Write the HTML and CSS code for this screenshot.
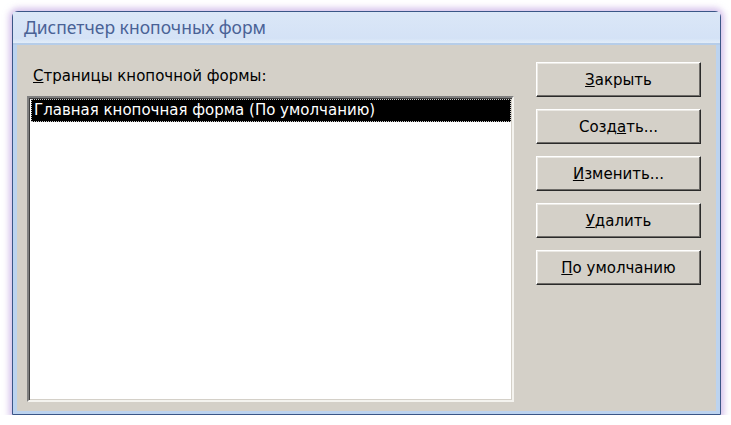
FILE: index.html
```html
<!DOCTYPE html>
<html lang="ru">
<head>
  <meta charset="UTF-8">
  <title>Диспетчер кнопочных форм</title>
  <link rel="stylesheet" href="styles.css">
</head>
<body>
  <div class="okno">
    <div class="zagolovok">Диспетчер кнопочных форм</div>
    <div class="ramka">
      <div class="soderzhimoe">
        <div class="levaya">
          <p class="metka"><u>С</u>траницы кнопочной формы:</p>
          <div class="spisok">
            <div class="stroka vybrana">Главная кнопочная форма (По умолчанию)</div>
          </div>
        </div>
        <div class="knopki">
          <button class="knopka"><u>З</u>акрыть</button>
          <button class="knopka">Созд<u>а</u>ть...</button>
          <button class="knopka"><u>И</u>зменить...</button>
          <button class="knopka"><u>У</u>далить</button>
          <button class="knopka"><u>П</u>о умолчанию</button>
        </div>
      </div>
    </div>
  </div>
</body>
</html>
```

FILE: styles.css
```css
body {
  margin: 0;
  background: #fff;
  font-family: "DejaVu Sans", sans-serif;
}
.okno {
  width: 707px;
  height: 402px;
  margin: 11px 0 0 12px;
  border: 1px solid #3b5687;
  border-radius: 6px 6px 0 0;
  box-shadow: 0 0 6px 3px rgba(190, 160, 225, 0.65);
  background: #d9e6f7;
  display: flex;
  flex-direction: column;
}
.zagolovok {
  height: 28px;
  padding: 3px 0 0 11px;
  font-family: "Noto Sans", "Open Sans", sans-serif;
  font-size: 17.5px;
  color: #4a6296;
  background: linear-gradient(#dbe7f7, #d4e2f6 85%, #e2edf9);
  border-bottom: 2px solid #b6cde9;
}
.ramka {
  flex: 1;
  padding: 0 4px 3px 4px;
  background: #bcd3ef;
  display: flex;
}
.soderzhimoe {
  flex: 1;
  background: #d4d0c8;
  display: flex;
  gap: 22px;
  padding: 17px 0 0 10px;
}
.levaya {
  width: 487px;
  display: flex;
  flex-direction: column;
}
.metka {
  margin: 5px 0 0 6px;
  height: 29px;
  font-size: 15px;
  color: #000;
}
.spisok {
  height: 300px;
  background: #fff;
  border: 2px solid;
  border-color: #808080 #f4f3ef #f4f3ef #808080;
  box-shadow: inset 1px 1px #404040, inset -1px -1px #d4d0c8;
  padding: 1px 1px 1px 2px;
}
.stroka {
  height: 23px;
  padding: 0 0 0 3px;
  font-size: 15px;
  line-height: 23px;
  white-space: nowrap;
}
.vybrana {
  background: #000;
  color: #fff;
  outline: 1px dotted #c8c8c8;
  outline-offset: -1px;
}
.knopki {
  width: 165px;
  display: flex;
  flex-direction: column;
  gap: 12px;
}
.knopka {
  height: 35px;
  font-family: "DejaVu Sans", sans-serif;
  font-size: 15px;
  color: #000;
  background: #d4d0c8;
  border: 1px solid;
  border-color: #fff #2a2a2a #2a2a2a #fff;
  box-shadow: inset -1px -1px #6e6c68, inset 1px 1px #ebe9e4;
  padding: 0;
}
```
